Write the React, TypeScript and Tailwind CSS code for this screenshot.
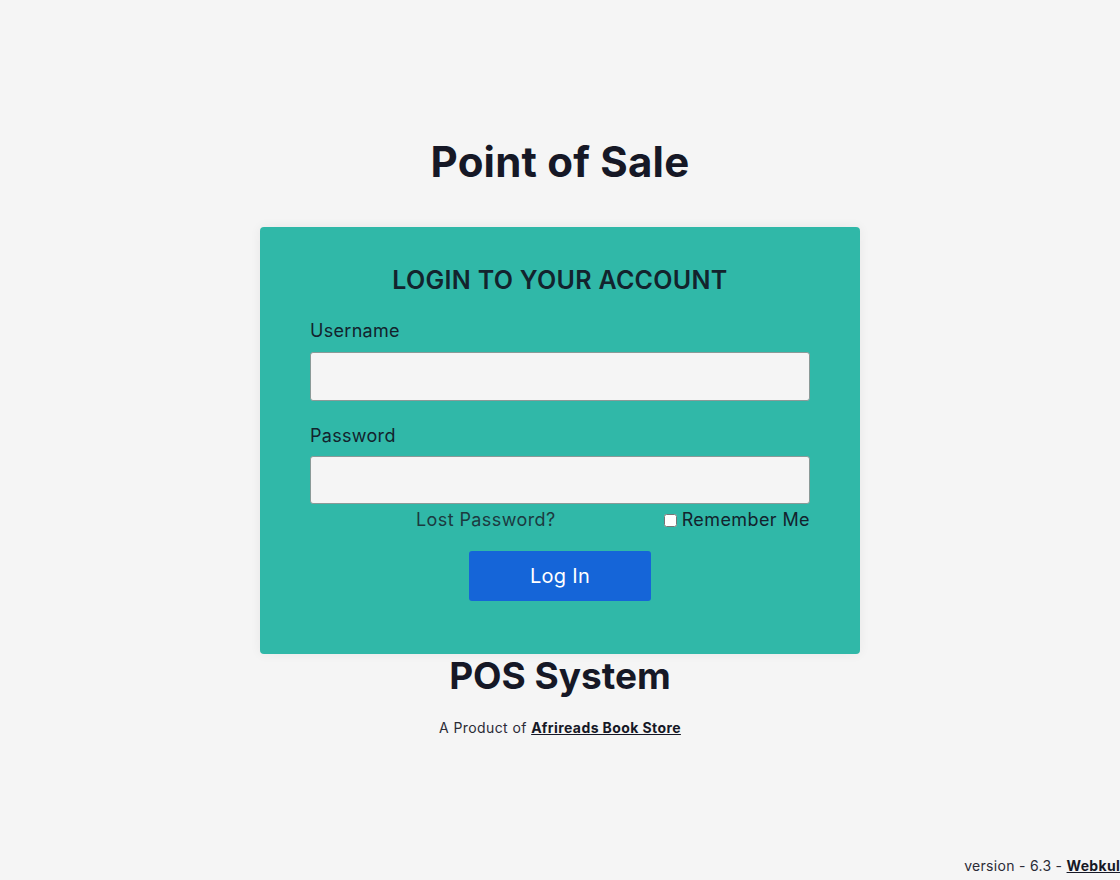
export default function App() {
  return (
    <div
      className="min-h-screen bg-[#f5f5f5] flex flex-col items-center overflow-hidden text-[#1b1b2a]"
      style={{ fontFamily: 'Inter, "Noto Sans", sans-serif' }}
    >
      {/* Header */}
      <h1 className="mt-[138px] text-[42px] leading-[48px] font-bold tracking-[0.2px] text-[#161826]">Point of Sale</h1>

      {/* Login card */}
      <div className="mt-[41px] w-[600px] rounded-[4px] bg-[#30b8a8] px-[50px] pt-[38px] pb-[53px] shadow-[0_0_12px_rgba(0,0,0,0.06)]">
        <h2 className="text-center text-[25px] leading-[30px] font-semibold text-[#13232d] tracking-[0.3px]">LOGIN TO YOUR ACCOUNT</h2>

        <label className="block mt-[24px] text-[18px] leading-[24px] text-[#13232d] tracking-[0.3px]">Username</label>
        <input
          type="text"
          className="mt-[9px] block w-full h-[49px] rounded-[3px] border border-[#8a9a98] bg-[#f5f5f5] px-3 outline-none"
        />

        <label className="block mt-[23px] text-[18px] leading-[24px] text-[#13232d] tracking-[0.3px]">Password</label>
        <input
          type="password"
          className="mt-[8px] block w-full h-[48px] rounded-[3px] border border-[#8a9a98] bg-[#f5f5f5] px-3 outline-none"
        />

        <div className="mt-[4px] flex items-center text-[18px] leading-[24px] text-[#13232d] tracking-[0.4px]">
          <a className="ml-[106px] text-[#1c3a40]">Lost Password?</a>
          <label className="ml-auto flex items-center gap-[5px]">
            <input type="checkbox" className="w-[13px] h-[13px] accent-white bg-white" />
            Remember Me
          </label>
        </div>

        <div className="mt-[19px] flex justify-center">
          <button className="w-[182px] h-[50px] rounded-[3px] bg-[#1565d8] text-white text-[20px] leading-[24px] tracking-[0.3px]">Log In</button>
        </div>
      </div>

      {/* Footer brand */}
      <h2 className="text-[37px] leading-[44px] font-bold text-[#161826]">POS System</h2>
      <p className="mt-[20px] text-[14px] leading-[20px] text-[#2b2b36] tracking-[0.4px]">
        A Product of <a className="font-bold underline text-[#161826]">Afrireads Book Store</a>
      </p>

      <div className="flex-1" />
      <div className="self-end pb-[4px] text-[14px] leading-[20px] text-[#2b2b36] whitespace-nowrap tracking-[0.3px]">
        version - 6.3 - <a className="font-bold underline text-[#161826]">Webkul</a>
      </div>
    </div>
  )
}
